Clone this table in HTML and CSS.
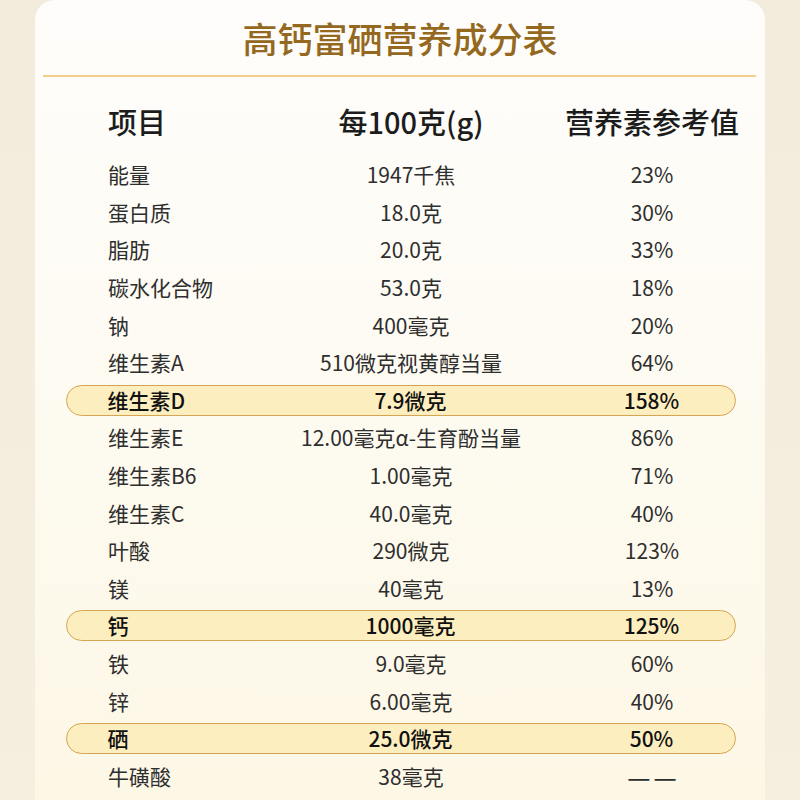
FILE: index.html
```html
<!DOCTYPE html>
<html lang="zh-CN">
<head>
<meta charset="utf-8">
<title>高钙富硒营养成分表</title>
<link rel="stylesheet" href="styles.css">
</head>
<body>
<div class="card">
  <div class="title-bar"><h1 class="title">高钙富硒营养成分表</h1></div>
  <div class="rule"></div>
  <div class="table">
    <div class="row head">
      <div class="c1">项目</div><div class="c2">每100克(g)</div><div class="c3">营养素参考值</div>
    </div>
    <div class="row"><div class="c1">能量</div><div class="c2">1947千焦</div><div class="c3">23%</div></div>
    <div class="row"><div class="c1">蛋白质</div><div class="c2">18.0克</div><div class="c3">30%</div></div>
    <div class="row"><div class="c1">脂肪</div><div class="c2">20.0克</div><div class="c3">33%</div></div>
    <div class="row"><div class="c1">碳水化合物</div><div class="c2">53.0克</div><div class="c3">18%</div></div>
    <div class="row"><div class="c1">钠</div><div class="c2">400毫克</div><div class="c3">20%</div></div>
    <div class="row"><div class="c1">维生素A</div><div class="c2">510微克视黄醇当量</div><div class="c3">64%</div></div>
    <div class="row hl"><div class="c1">维生素D</div><div class="c2">7.9微克</div><div class="c3">158%</div></div>
    <div class="row"><div class="c1">维生素E</div><div class="c2">12.00毫克α-生育酚当量</div><div class="c3">86%</div></div>
    <div class="row"><div class="c1">维生素B6</div><div class="c2">1.00毫克</div><div class="c3">71%</div></div>
    <div class="row"><div class="c1">维生素C</div><div class="c2">40.0毫克</div><div class="c3">40%</div></div>
    <div class="row"><div class="c1">叶酸</div><div class="c2">290微克</div><div class="c3">123%</div></div>
    <div class="row"><div class="c1">镁</div><div class="c2">40毫克</div><div class="c3">13%</div></div>
    <div class="row hl"><div class="c1">钙</div><div class="c2">1000毫克</div><div class="c3">125%</div></div>
    <div class="row"><div class="c1">铁</div><div class="c2">9.0毫克</div><div class="c3">60%</div></div>
    <div class="row"><div class="c1">锌</div><div class="c2">6.00毫克</div><div class="c3">40%</div></div>
    <div class="row hl"><div class="c1">硒</div><div class="c2">25.0微克</div><div class="c3">50%</div></div>
    <div class="row"><div class="c1">牛磺酸</div><div class="c2">38毫克</div><div class="c3 dash"><span>—</span><span>—</span></div></div>
  </div>
</div>
</body>
</html>
```

FILE: styles.css
```css
html, body {
  margin: 0;
  padding: 0;
}
body {
  width: 800px;
  height: 800px;
  overflow: hidden;
  background: linear-gradient(180deg, #f3ebdb 0%, #f6efdf 100%);
  font-family: "Noto Sans CJK SC", "Noto Sans", sans-serif;
}
.card {
  margin: 0 35px;
  width: 730px;
  height: 820px;
  border-radius: 20px 20px 0 0;
  background: linear-gradient(180deg, #fefdfb 0%, #fdfbf3 40%, #fdf7e5 100%);
}
.title-bar {
  height: 75px;
  display: flex;
  align-items: center;
  justify-content: center;
}
.title {
  margin: 0;
  font-size: 35px;
  font-weight: 500;
  line-height: 1;
  color: #94691f;
}
.rule {
  margin: 0 9px 0 8px;
  height: 2px;
  background: #f4cf89;
}
.table {
  padding: 0 29px 0 31px;
}
.row {
  display: grid;
  grid-template-columns: 146px 314px 168px;
  height: 37.6px;
  align-items: center;
  padding-left: 42px;
  box-sizing: border-box;
  font-size: 21px;
  font-weight: 400;
  line-height: 1;
  color: #2e2e2e;
}
.row > div {
  display: flex;
  white-space: nowrap;
}
.c2, .c3 {
  justify-content: center;
}
.row.head {
  height: 70px;
  margin-top: 9px;
  font-size: 29px;
  font-weight: 500;
  color: #1c1c1c;
}
.row.hl {
  height: 31px;
  margin: 3.3px 0;
  background: #fdeebf;
  border: 1.5px solid #d6a553;
  border-radius: 16px;
  font-weight: 500;
  color: #111;
  padding-left: 40.5px;
}
.dash {
  gap: 3px;
  font-size: 26px;
}
```
